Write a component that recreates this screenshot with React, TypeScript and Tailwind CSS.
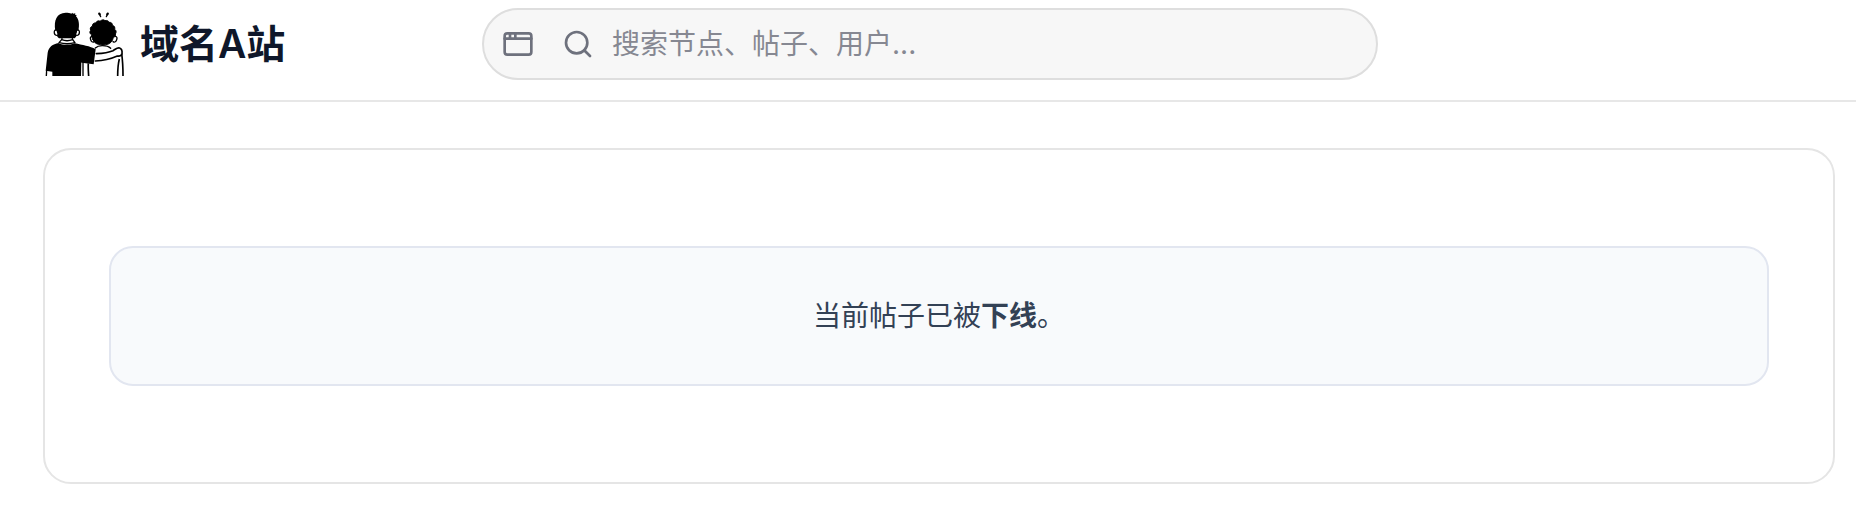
import { useState } from 'react'
import { AppWindow, Search } from 'lucide-react'

function Logo() {
  return (
    <svg
      viewBox="42 36 240 192"
      className="h-16 w-20 shrink-0"
      fill="none"
      stroke="#000"
      strokeWidth={5}
      strokeLinecap="round"
      strokeLinejoin="round"
      aria-hidden="true"
    >
      {/* Left figure */}
      <path
        fill="#000"
        stroke="none"
        d="M76 92C71 60 80 39 107 38c7 0 13 1 17 3l3-3 2 3 7-1-1 4 5 1-2 4c9 9 11 26 7 43-2 11-6 18-11 23H87C81 110 77 101 76 92Z"
      />
      <path fill="#fff" strokeWidth={4} d="M79 90c-5-1-7 4-6 9 1 5 5 9 10 6" />
      <path fill="#fff" strokeWidth={4} d="M142 90c5-1 7 4 6 9-1 5-5 9-10 6" />
      <path fill="#000" stroke="none" d="M80 90h62c-3 14-10 22-22 24H101c-11-3-18-12-21-24Z" />
      <path strokeWidth={3.5} d="M97 111l-2 8M126 111l2 8" />
      <path
        fill="#000"
        stroke="none"
        d="M86 129C68 132 56 141 53 158l-6 54 20 3v13h86l2-40 36 5 6-45c-17-10-40-13-63-18-16 6-33 6-48 0Z"
      />
      <path fill="#fff" strokeWidth={4} d="M95 119c10 4 22 4 33 0l7 9c-15 4-33 4-48 0Z" />
      <path strokeWidth={4} strokeLinecap="butt" d="M50 210l-1 18" />
      <path stroke="#fff" strokeWidth={2} strokeLinecap="butt" d="M155 188v40" />
      <path strokeWidth={4} strokeLinecap="butt" d="M159 186v42" />

      {/* Right figure */}
      <path strokeWidth={4} d="M186 109c-5 0-6 5-4 10 1 6 6 9 11 6M256 109c5 0 6 5 4 10-1 6-6 9-11 6" />
      <path
        fill="#000"
        stroke="#000"
        strokeWidth={3}
        d="M189 119c-3-5-4-9-4-14-6-4-7-9-3-14-3-6 0-11 5-12 0-7 4-11 10-10 3-6 9-8 13-5 5-5 11-6 15-2 6-2 11 1 12 5 7-1 11 4 10 9 6 1 9 7 7 12 6 4 5 10 2 14 2 6-2 9-6 10-2 11-8 18-17 21-9 3-20 3-28 0-8-2-13-7-16-14Z"
      />
      <path strokeWidth={4} d="M196 144c5-5 12-7 21-7 11 0 19 2 25 8" />
      <path d="M199 161c18-1 38-4 50-9 8-4 13-11 20-8 5 2 8 9 7 17-2 6-7 8-14 7-18 8-40 14-66 15" />
      <path d="M175 190c-1 13 0 24 1 38M268 177c-4 16-5 34-5 51M275 161c3 21 4 43 4 67" strokeLinecap="butt" />

      {/* Sparks above the head */}
      <path strokeWidth={7} d="M208 41l1 2M233 41l-1 2" />
      <path strokeWidth={4} d="M208 41l4 9M233 41l-4 9" />
    </svg>
  )
}

function SearchBar() {
  const [query, setQuery] = useState('')

  return (
    <form
      role="search"
      className="flex h-[72px] w-full items-center rounded-full border-2 border-[#dedede] bg-[#f7f7f7] pr-6 pl-[18px] text-[#6e717d]"
      onSubmit={(e) => e.preventDefault()}
    >
      <button type="button" aria-label="选择搜索范围" className="shrink-0">
        <AppWindow size={32} />
      </button>
      <button type="submit" aria-label="搜索" className="ml-7 shrink-0">
        <Search size={32} />
      </button>
      <input
        type="text"
        aria-label="搜索节点、帖子、用户"
        value={query}
        onChange={(e) => setQuery(e.target.value)}
        placeholder="搜索节点、帖子、用户..."
        className="ml-[18px] min-w-0 flex-1 bg-transparent text-[28px] leading-10 text-[#0f172a] outline-none placeholder:text-[#868892]"
      />
    </form>
  )
}

function Header() {
  return (
    <header className="grid grid-cols-[1fr_minmax(0,896px)_1fr] items-center border-b-2 border-[#e7e7e7] pt-2 pr-10 pb-5 pl-11">
      <a href="/" className="flex items-center gap-4">
        <Logo />
        <span className="text-[39px] leading-[56px] font-semibold whitespace-nowrap text-[#0f172a]">
          域名A站
        </span>
      </a>
      <SearchBar />
    </header>
  )
}

export default function App() {
  return (
    <div className="bg-white font-[Inter,'Noto_Sans_CJK_SC',sans-serif]">
      <Header />
      <main className="pt-[46px] pr-[21px] pb-[30px] pl-[43px]">
        <section className="rounded-[28px] border-2 border-[#e5e5e5] px-16 py-24">
          <div className="rounded-3xl border-2 border-[#e2e6f0] bg-[#f8fafc] px-8 py-12 text-center">
            <p className="text-[28px] leading-10 text-[#334155]">
              当前帖子已被<strong className="font-bold">下线</strong>。
            </p>
          </div>
        </section>
      </main>
    </div>
  )
}
